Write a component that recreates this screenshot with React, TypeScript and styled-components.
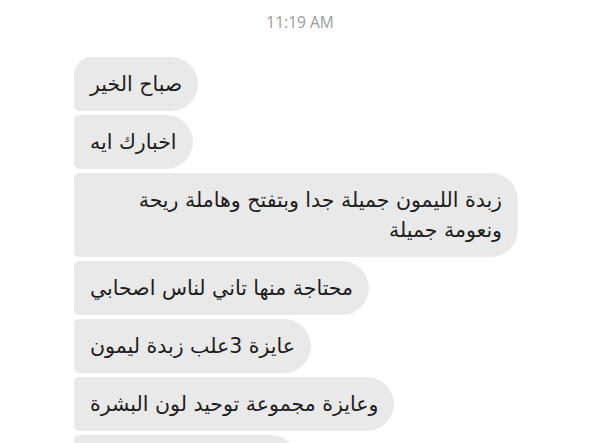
import React from "react";
import styled, { createGlobalStyle } from "styled-components";

const Global = createGlobalStyle`
  html, body { margin: 0; padding: 0; background: #ffffff; }
  body { width: 600px; height: 443px; overflow: hidden; }
`;

const Thread = styled.div`
  display: flex;
  flex-direction: column;
  box-sizing: border-box;
  height: 443px;
  overflow: hidden;
  padding: 12px 0 0 74px;
  font-family: "DejaVu Sans", sans-serif;
`;

const Stamp = styled.div`
  align-self: center;
  margin-left: -74px;
  font-family: "Open Sans", "Liberation Sans", sans-serif;
  font-size: 15.5px;
  line-height: 21px;
  color: #9a9a9a;
  margin-bottom: 24px;
`;

const Group = styled.div`
  display: flex;
  flex-direction: column;
  align-items: flex-start;
  gap: 4px;
`;

const Bubble = styled.div<{ $first?: boolean; $w?: number }>`
  direction: rtl;
  text-align: right;
  box-sizing: border-box;
  flex-shrink: 0;
  background: #e9e9e9;
  color: #1d1d1d;
  font-size: 20.5px;
  line-height: 30px;
  padding: 12px 16px;
  min-height: 54px;
  border-top-right-radius: 27px;
  border-bottom-right-radius: 27px;
  border-top-left-radius: ${(p) => (p.$first ? "18px" : "5px")};
  border-bottom-left-radius: 5px;
  ${(p) => (p.$w ? `width: ${p.$w}px;` : "")}
`;

export default function App() {
  return (
    <>
      <Global />
      <Thread>
        <Stamp>11:19 AM</Stamp>
        <Group>
          <Bubble $first>صباح الخير</Bubble>
          <Bubble>اخبارك ايه</Bubble>
          <Bubble $w={444}>
            زبدة الليمون جميلة جدا وبتفتح وهاملة ريحة
            <br />
            ونعومة جميلة
          </Bubble>
          <Bubble>محتاجة منها تاني لناس اصحابي</Bubble>
          <Bubble>عايزة 3علب زبدة ليمون</Bubble>
          <Bubble>وعايزة مجموعة توحيد لون البشرة</Bubble>
          <Bubble $w={224}>&nbsp;</Bubble>
        </Group>
      </Thread>
    </>
  );
}
